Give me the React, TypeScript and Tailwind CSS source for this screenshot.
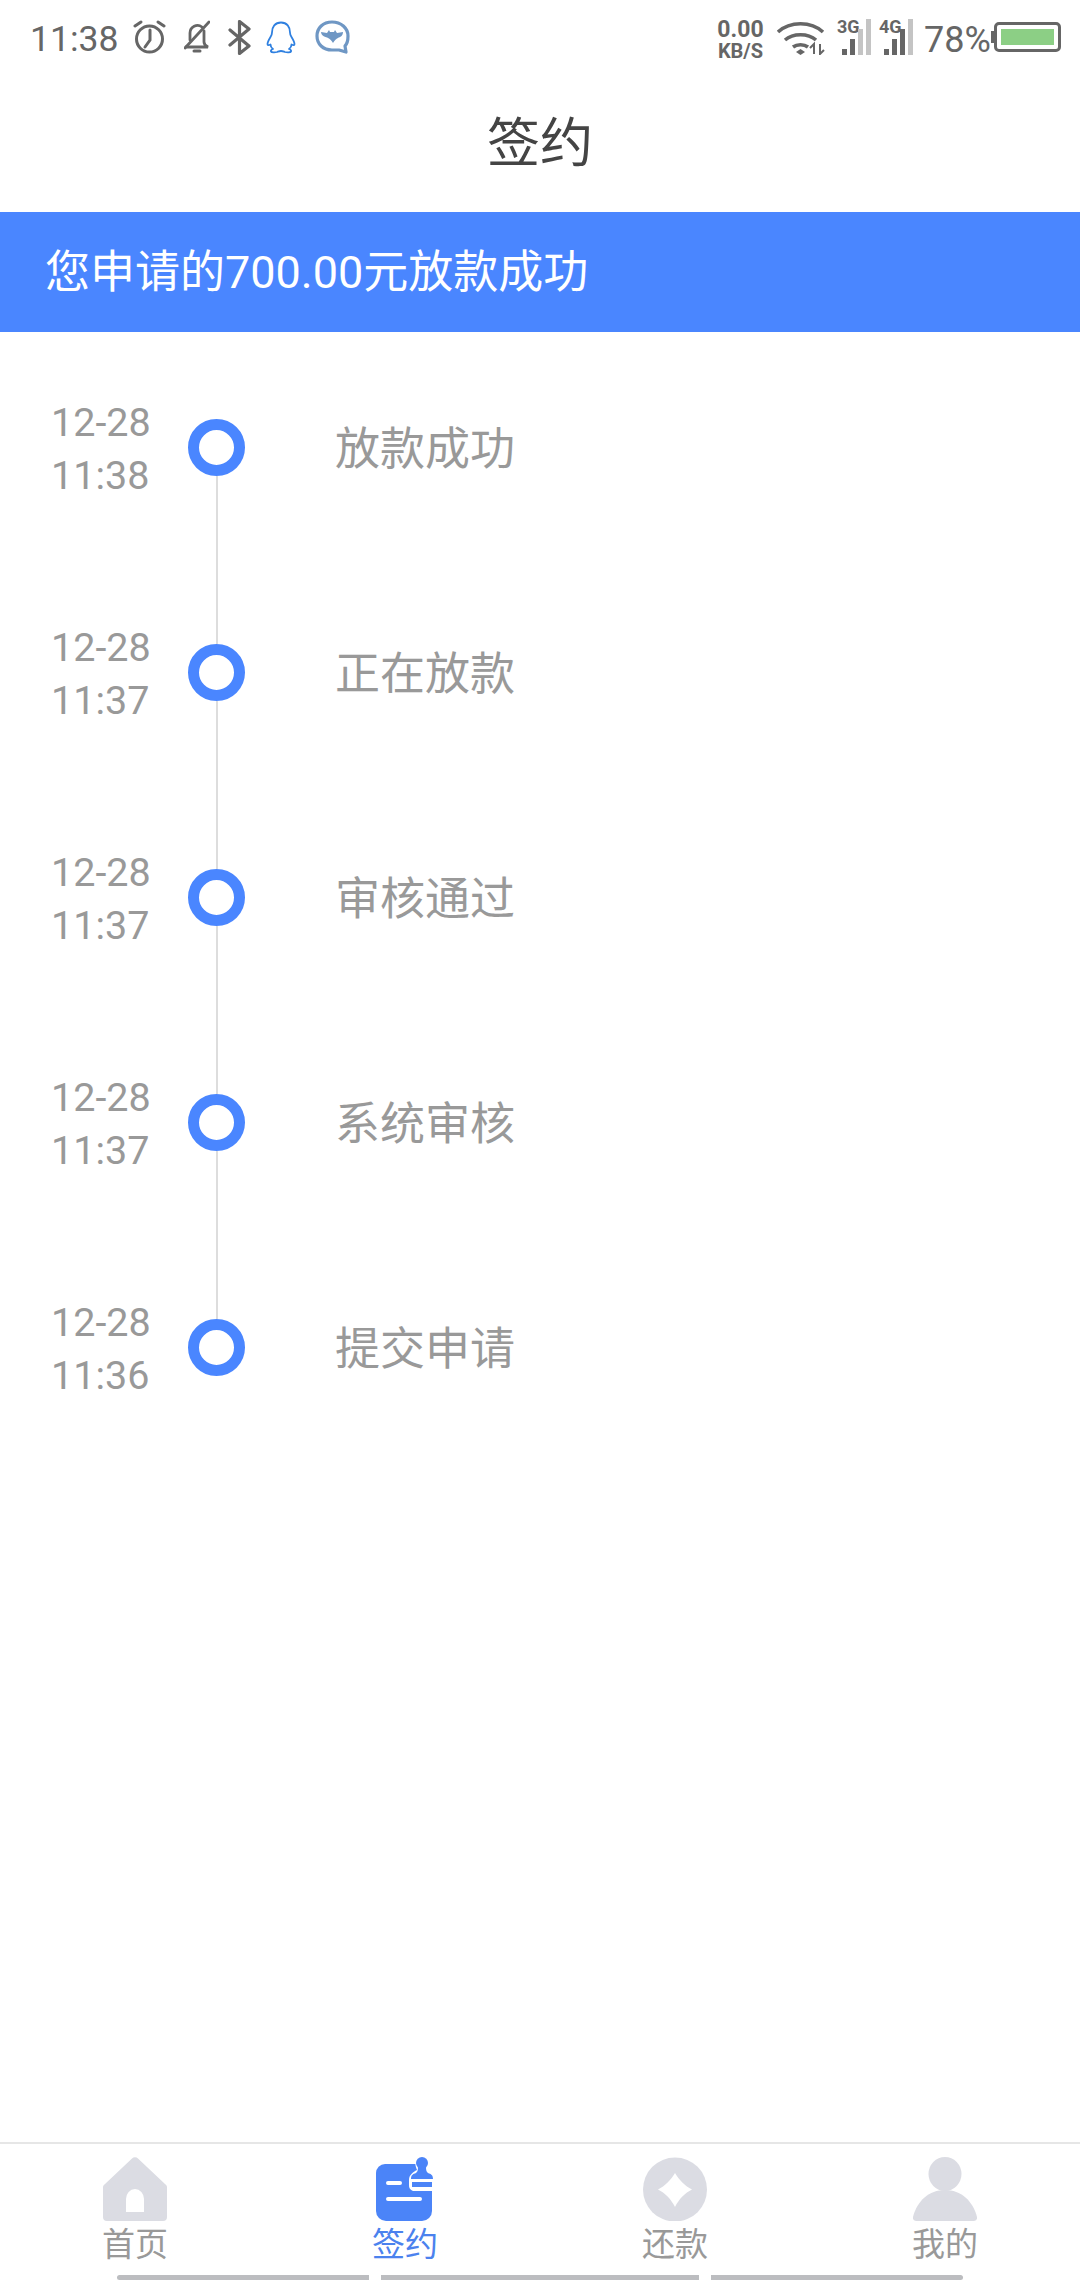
import React from 'react';

interface Step {
  date: string;
  time: string;
  label: string;
}

const steps: Step[] = [
  { date: '12-28', time: '11:38', label: '放款成功' },
  { date: '12-28', time: '11:37', label: '正在放款' },
  { date: '12-28', time: '11:37', label: '审核通过' },
  { date: '12-28', time: '11:37', label: '系统审核' },
  { date: '12-28', time: '11:36', label: '提交申请' },
];

const Signal: React.FC<{ tag: string; full: boolean }> = ({ tag, full }) => (
  <div className="relative w-[35px] h-[36px]">
    <span className="absolute left-0 top-[-1px] text-[18px] leading-[18px] font-bold text-[#666]">{tag}</span>
    <div className="absolute inset-0 flex items-end gap-[3px]">
      <div className="ml-[5px] w-[5px] h-[6px] bg-[#666]" />
      <div className="w-[5px] h-[16px] bg-[#666]" />
      <div className={`w-[5px] h-[26px] ${full ? 'bg-[#666]' : 'bg-[#c4c4c4]'}`} />
      <div className="w-[5px] h-[36px] bg-[#c4c4c4]" />
    </div>
  </div>
);

const StatusBar = () => (
  <div className="h-[72px] flex items-start justify-between pt-[19px] pl-[30px] pr-[19px]">
    <div className="flex items-center h-[36px]">
      <span className="text-[35.5px] leading-[36px] mt-[3px] text-[#666] w-[103px]">11:38</span>
      <svg width="33" height="34" viewBox="0 0 33 34" fill="none" stroke="#666" strokeWidth="3" strokeLinecap="round">
        <circle cx="16.5" cy="19" r="13" />
        <path d="M17 10v10l-5 7" />
        <path d="M2 6l6-4M31 6l-6-4" />
      </svg>
      <svg className="ml-[18px]" width="26" height="34" viewBox="0 0 26 34" fill="none" stroke="#666" strokeWidth="2.800" strokeLinecap="round">
        <path d="M6 20V13a7.500 7.500 0 0 1 12-6M20 11v11c0 3 2 4 4 5H2" />
        <path d="M1 28L25 2" />
        <path d="M10 31h6" strokeWidth="3" />
      </svg>
      <svg className="ml-[18px]" width="23" height="35" viewBox="0 0 23 35" fill="none" stroke="#666" strokeWidth="3.200" strokeLinejoin="round" strokeLinecap="round">
        <path d="M2 10l19 16-9.500 7.500V1.500L21 9 2 25" />
      </svg>
      <svg className="ml-[15px]" width="30" height="33" viewBox="0 0 30 33" fill="none" stroke="#2f80e0" strokeWidth="1.800" strokeLinejoin="round">
        <path d="M15 1.500c-6 0-9 4.500-9 10 0 2-.5 3-1.500 4.500C3 18.500 1.500 21 1.500 23c0 1.500 1 1.500 3 .5 0 2 1 3.500 2.500 4.500-1.500.5-2.500 1.500-2 2.500.5 1 4 1 6 .5 1.500-.5 2.500-1 4-1s2.500.5 4 1c2 .5 5.500.5 6-.5.5-1-.5-2-2-2.500 1.500-1 2.500-2.500 2.500-4.500 2 1 3 1 3-.5 0-2-1.500-4.500-3-7-1-1.500-1.500-2.500-1.500-4.500 0-5.500-3-10-9-10z" />
      </svg>
      <svg className="ml-[19px]" width="35" height="34" viewBox="0 0 35 34" fill="none">
        <path d="M17 2C8 2 2 8 2 16s6 14 15 14h7l7 2-1-6c2.500-2.500 3-6 3-10C33 8 26 2 17 2z" stroke="#6f97c4" strokeWidth="3.200" strokeLinejoin="round" />
        <path d="M6 12l6 1 2-3 1 2h4l1-2 2 3 6-1c0 4-3 5-5 6-2 1-3 2-5 5-2-3-3-4-5-5-2-1-7-2-7-6z" fill="#6f97c4" />
      </svg>
    </div>
    <div className="flex items-start">
      <div className="w-[47px] flex flex-col items-center text-[#666] font-bold">
        <span className="text-[23px] leading-[21px]">0.00</span>
        <span className="text-[20px] leading-[18px] mt-[2px]">KB/S</span>
      </div>
      <svg className="ml-[13px] mt-[2px]" width="48" height="34" viewBox="0 0 48 34" fill="none" stroke="#666" strokeWidth="3.600">
        <path d="M1 11c12-11 33-11 45 0" />
        <path d="M8 19c8-7 23-7 31 0" />
        <path d="M16 26c4-3 11-3 15 0" />
        <path d="M19 31l4.500-3 4.500 3-4.500 3z" fill="#666" stroke="none" />
        <path d="M37 23v10M33 27l4-4v10M43 23v10l4-4" strokeWidth="2" />
      </svg>
      <div className="ml-[12px]"><Signal tag="3G" full={false} /></div>
      <div className="ml-[7px]"><Signal tag="4G" full={true} /></div>
      <span className="ml-[10px] w-[67px] mt-[3px] text-[36px] leading-[36px] text-[#666]">78%</span>
      <div className="mt-[3px] flex items-center">
        <div className="w-[3px] h-[12px] bg-[#666]" />
        <div className="w-[67px] h-[30px] border-[3px] border-[#666] rounded-[5px] p-[4px] bg-white">
          <div className="h-full bg-[#8ccf85]" />
        </div>
      </div>
    </div>
  </div>
);

const TabBar = () => (
  <div className="border-t-2 border-[#e6e6e6] bg-white">
    <div className="grid grid-cols-4 h-[131px] pt-[13px] text-[33px] leading-[40px] text-[#999]">
      <div className="flex flex-col items-center">
        <svg width="64" height="64" viewBox="0 0 64 64">
          <path d="M29 1.500a4 4 0 0 1 6 0L62 27a4 4 0 0 1 2 4v29a4 4 0 0 1-4 4H4a4 4 0 0 1-4-4V31a4 4 0 0 1 2-4z" fill="#dbdce3" />
          <path d="M23 55V42a9 10 0 0 1 18 0v13z" fill="#fff" />
        </svg>
        <span className="mt-[4px]">首页</span>
      </div>
      <div className="flex flex-col items-center text-[#4b82ee]">
        <svg width="58" height="64" viewBox="0 0 58 64">
          <path d="M9 7h38a9 9 0 0 1 9 9v38a10 10 0 0 1-10 10H10A10 10 0 0 1 0 54V16a9 9 0 0 1 9-9z" fill="#4b84f8" />
          <path d="M12 26h12M12 42h32" stroke="#fff" strokeWidth="4" strokeLinecap="round" />
          <path d="M40 0h18v34H37a6 6 0 0 1-4-6v-5c0-5 4-8 8-10-1-3-3-8-1-13z" fill="#fff" />
          <circle cx="46" cy="6" r="6" fill="#4b84f8" />
          <path d="M42 10h8c0 4 1 5 2 6 3 1 5 2 5 6H35c0-4 2-5 5-6 1-1 2-2 2-6z" fill="#4b84f8" />
          <path d="M36 25h20v5H36z" fill="#4b84f8" />
        </svg>
        <span className="mt-[4px]">签约</span>
      </div>
      <div className="flex flex-col items-center">
        <svg width="64" height="64" viewBox="0 0 64 64">
          <ellipse cx="32" cy="32.500" rx="32" ry="32" fill="#dbdce3" />
          <path d="M32 16c4 7 10 13 17 16.500C42 36 36 42 32 50c-4-8-10-14-17-17.500C22 29 28 23 32 16z" fill="#fff" />
        </svg>
        <span className="mt-[4px]">还款</span>
      </div>
      <div className="flex flex-col items-center">
        <svg width="64" height="64" viewBox="0 0 64 64">
          <ellipse cx="32" cy="17" rx="16.500" ry="17" fill="#dbdce3" />
          <path d="M32 33c16 0 28 11 32 27a3.500 3.500 0 0 1-3 4H3a3.500 3.500 0 0 1-3-4C4 44 16 33 32 33z" fill="#dbdce3" />
        </svg>
        <span className="mt-[4px]">我的</span>
      </div>
    </div>
    <div className="h-[5px] flex pl-[117px] gap-[12px]">
      <div className="w-[252px] bg-[#bcbdc0] rounded-l-[3px]" />
      <div className="w-[318px] bg-[#bcbdc0]" />
      <div className="w-[252px] bg-[#bcbdc0] rounded-r-[3px]" />
    </div>
  </div>
);

export default function App() {
  return (
    <div className="w-[1080px] h-[2280px] flex flex-col bg-white font-['Roboto','Noto_Sans_CJK_SC',sans-serif]">
      <StatusBar />
      <div className="h-[140px] flex items-center justify-center pt-[6px] text-[53px] text-[#444]">签约</div>
      <div className="h-[120px] flex items-center bg-[#4a86ff] pl-[45px] pt-[2px] text-[45px] text-white">
        您申请的700.00元放款成功
      </div>
      <div className="flex-1 pt-[87px]">
        {steps.map((step, index) => (
          <div key={index} className="flex h-[225px]">
            <div className="w-[188px] h-[57px] pl-[51px] pt-[3px] flex flex-col justify-center text-[39.5px] leading-[53px] text-[#999] shrink-0">
              <span>{step.date}</span>
              <span>{step.time}</span>
            </div>
            <div className="w-[57px] flex flex-col items-center shrink-0">
              <div className="w-[57px] h-[57px] rounded-full border-[11px] border-[#4a86ff] shrink-0" />
              {index < steps.length - 1 && <div className="w-[2px] flex-1 bg-[#dddddd]" />}
            </div>
            <div className="ml-[90px] h-[57px] pt-[5px] flex items-center text-[45px] text-[#999]">{step.label}</div>
          </div>
        ))}
      </div>
      <TabBar />
    </div>
  );
}
